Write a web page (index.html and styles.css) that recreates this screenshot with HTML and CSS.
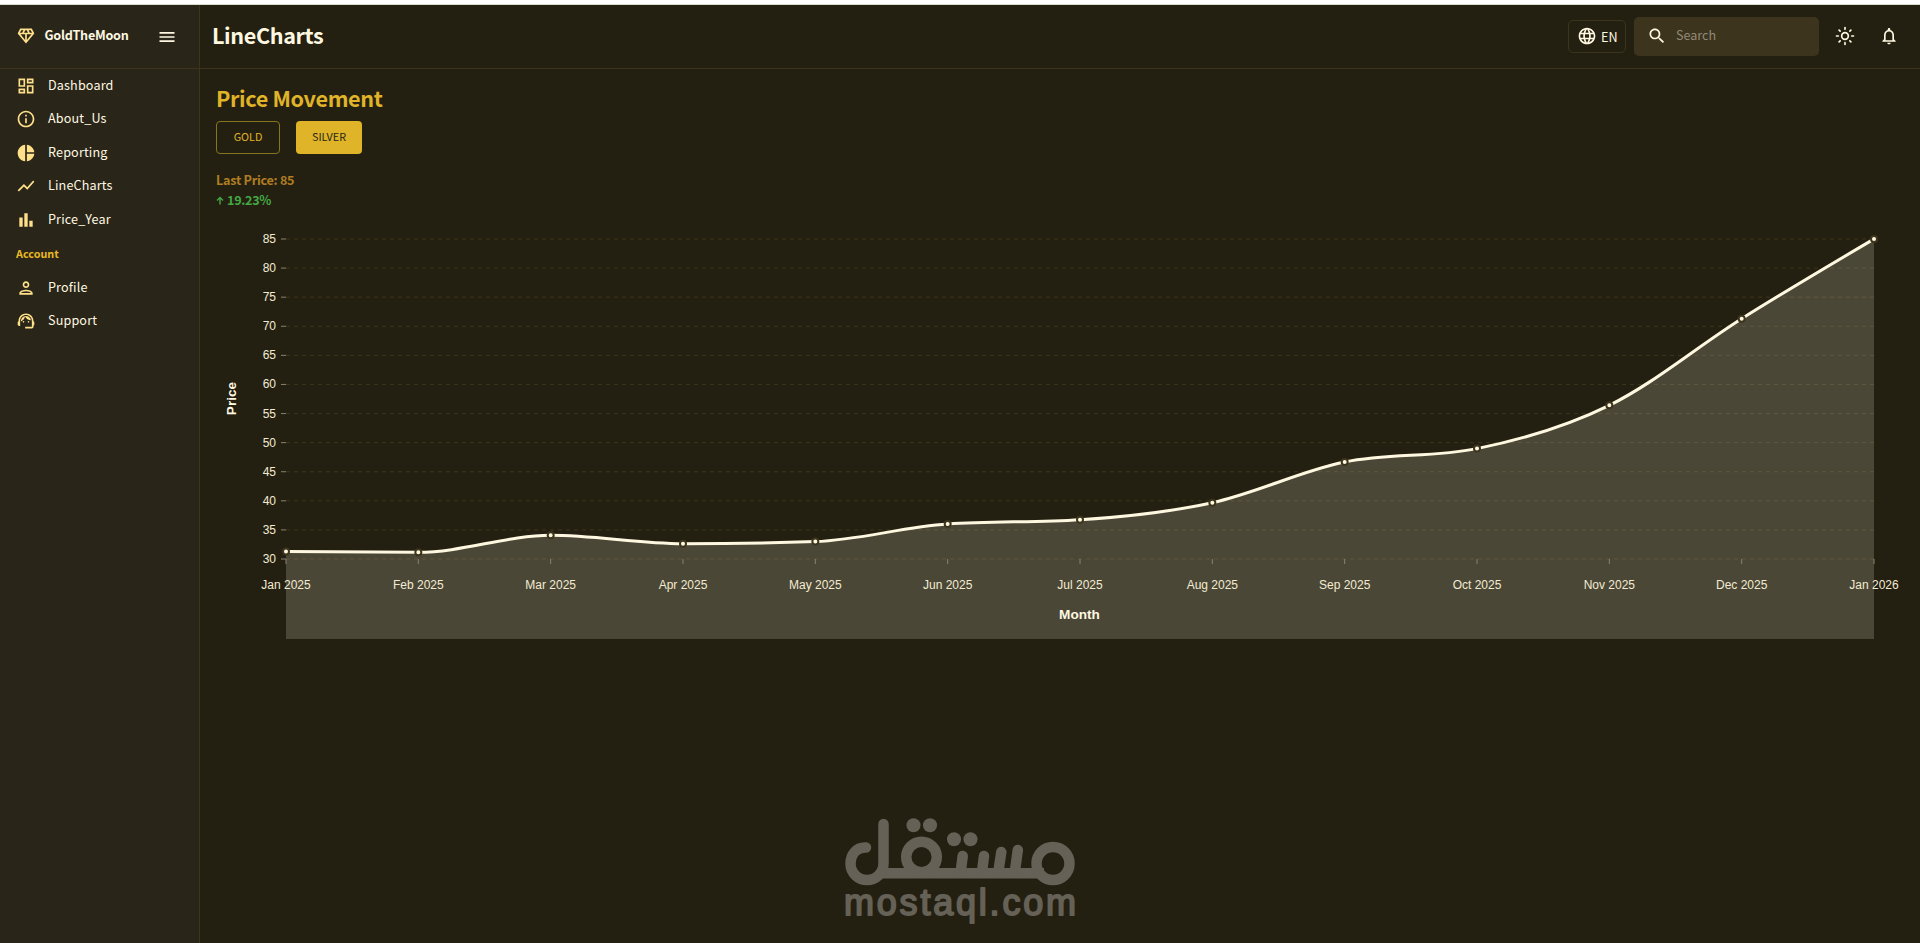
FILE: index.html
```
<!DOCTYPE html>
<html lang="en">
<head>
<meta charset="utf-8">
<title>GoldTheMoon - LineCharts</title>
<link rel="stylesheet" href="styles.css">
</head>
<body>
<div class="app">
  <aside class="sidebar">
    <div class="brand">
      <svg class="icon brand-icon" viewBox="0 0 24 24"><path d="M19 3H5L2 9l10 12L22 9l-3-6zM9.62 8l1.5-3h1.76l1.5 3H9.62zM11 10v6.68L5.44 10H11zm2 0h5.56L13 16.68V10zm6.26-2h-2.65l-1.5-3h2.65l1.5 3zM6.24 5h2.65l-1.5 3H4.74l1.5-3z"/></svg>
      <span class="brand-name">GoldTheMoon</span>
      <svg class="icon menu-icon" viewBox="0 0 24 24"><path d="M3 18h18v-2H3v2zm0-5h18v-2H3v2zm0-7v2h18V6H3z"/></svg>
    </div>
    <nav class="nav">
      <a class="nav-item"><svg class="icon" viewBox="0 0 24 24"><path d="M19 5v2h-4V5h4M9 5v6H5V5h4m10 8v6h-4v-6h4M9 17v2H5v-2h4M21 3h-8v6h8V3zM11 3H3v10h8V3zm10 8h-8v10h8V11zm-10 4H3v6h8v-6z"/></svg><span>Dashboard</span></a>
      <a class="nav-item"><svg class="icon" viewBox="0 0 24 24"><path d="M11 7h2v2h-2zm0 4h2v6h-2zm1-9C6.48 2 2 6.48 2 12s4.480 10 10 10 10-4.480 10-10S17.520 2 12 2zm0 18c-4.410 0-8-3.590-8-8s3.590-8 8-8 8 3.590 8 8-3.590 8-8 8z"/></svg><span>About_Us</span></a>
      <a class="nav-item"><svg class="icon" viewBox="0 0 24 24"><path d="M11 2v20c-5.070-.5-9-4.790-9-10s3.930-9.500 9-10zm2.030 0v8.990H22c-.470-4.740-4.240-8.520-8.970-8.990zm0 11.010V22c4.740-.470 8.500-4.250 8.970-8.990h-8.970z"/></svg><span>Reporting</span></a>
      <a class="nav-item"><svg class="icon" viewBox="0 0 24 24"><path d="M3.500 18.490l6-6.010 4 4L22 6.920l-1.410-1.410-7.090 7.970-4-4L2 16.990z"/></svg><span>LineCharts</span></a>
      <a class="nav-item"><svg class="icon" viewBox="0 0 24 24"><path d="M4 9h4v11H4zm12 4h4v7h-4zm-6-9h4v16h-4z"/></svg><span>Price_Year</span></a>
      <div class="nav-title">Account</div>
      <a class="nav-item"><svg class="icon" viewBox="0 0 24 24"><path d="M12 6c1.100 0 2 .9 2 2s-.9 2-2 2-2-.9-2-2 .9-2 2-2m0 10c2.700 0 5.800 1.290 6 2H6c.230-.720 3.310-2 6-2m0-12C9.790 4 8 5.790 8 8s1.790 4 4 4 4-1.790 4-4-1.790-4-4-4zm0 10c-2.670 0-8 1.340-8 4v2h16v-2c0-2.660-5.330-4-8-4z"/></svg><span>Profile</span></a>
      <a class="nav-item"><svg class="icon" viewBox="0 0 24 24"><path d="M21 12.220C21 6.730 16.740 3 12 3c-4.690 0-9 3.650-9 9.280-.6.340-1 .980-1 1.720v2c0 1.100.9 2 2 2h1v-6.100c0-3.870 3.130-7 7-7s7 3.130 7 7V19h-8v2h8c1.100 0 2-.9 2-2v-1.220c.590-.310 1-.920 1-1.640v-2.300c0-.7-.410-1.310-1-1.620z"/><circle cx="9" cy="13" r="1"/><circle cx="15" cy="13" r="1"/><path d="M18 11.030C17.520 8.180 15.040 6 12.050 6c-3.030 0-6.290 2.510-6.030 6.450 2.470-1.010 4.330-3.210 4.860-5.890 1.310 2.630 4 4.440 7.120 4.470z"/></svg><span>Support</span></a>
    </nav>
  </aside>
  <div class="main">
    <header class="topbar">
      <h1 class="page-title">LineCharts</h1>
      <div class="tools">
        <button class="lang"><svg class="icon" viewBox="0 0 24 24"><path d="M11.990 2C6.470 2 2 6.480 2 12s4.470 10 9.990 10C17.520 22 22 17.520 22 12S17.520 2 11.990 2zm6.930 6h-2.950c-.320-1.250-.780-2.450-1.380-3.560 1.840.630 3.370 1.910 4.330 3.560zM12 4.040c.830 1.200 1.480 2.530 1.910 3.960h-3.820c.430-1.430 1.080-2.760 1.910-3.960zM4.260 14C4.100 13.360 4 12.690 4 12s.1-1.360.260-2h3.380c-.080.660-.140 1.320-.140 2s.060 1.340.140 2H4.260zm.820 2h2.950c.320 1.250.780 2.450 1.380 3.560-1.840-.630-3.370-1.900-4.330-3.560zm2.950-8H5.080c.960-1.660 2.490-2.930 4.330-3.560C8.810 5.550 8.350 6.750 8.030 8zM12 19.960c-.830-1.200-1.480-2.530-1.910-3.960h3.820c-.430 1.430-1.080 2.760-1.910 3.960zM14.340 14H9.660c-.090-.660-.160-1.320-.160-2s.070-1.350.160-2h4.680c.090.650.160 1.320.160 2s-.070 1.340-.160 2zm.250 5.560c.6-1.110 1.060-2.310 1.380-3.560h2.950c-.960 1.650-2.490 2.930-4.330 3.560zM16.360 14c.080-.660.140-1.320.140-2s-.060-1.340-.140-2h3.380c.160.640.260 1.310.260 2s-.1 1.360-.260 2h-3.380z"/></svg><span>EN</span></button>
        <div class="search"><svg class="icon" viewBox="0 0 24 24"><path d="M15.500 14h-.790l-.280-.270C15.410 12.590 16 11.110 16 9.500 16 5.910 13.090 3 9.500 3S3 5.910 3 9.500 5.910 16 9.500 16c1.610 0 3.090-.590 4.230-1.570l.270.280v.790l5 4.990L20.490 19l-4.990-5zm-6 0C7.010 14 5 11.990 5 9.500S7.010 5 9.500 5 14 7.010 14 9.500 11.990 14 9.500 14z"/></svg><span>Search</span></div>
        <svg class="icon sun" viewBox="0 0 24 24"><circle class="stroke" cx="12" cy="12" r="4"/><path class="stroke round" d="M12 1.800v2.200M12 20v2.200M1.800 12H4M20 12h2.200M4.900 4.900l1.300 1.300M17.800 17.800l1.300 1.300M4.900 19.100l1.300-1.300M17.800 6.200l1.300-1.300"/></svg>
        <svg class="icon bell" viewBox="0 0 24 24"><path d="M12 22c1.100 0 2-.9 2-2h-4c0 1.100.9 2 2 2zm6-6v-5c0-3.070-1.630-5.640-4.500-6.320V4c0-.830-.670-1.500-1.500-1.500s-1.500.670-1.500 1.500v.680C7.640 5.360 6 7.920 6 11v5l-2 2v1h16v-1l-2-2zm-2 1H8v-6c0-2.480 1.510-4.500 4-4.500s4 2.020 4 4.500v6z"/></svg>
      </div>
    </header>
    <main class="content">
      <h2 class="heading">Price Movement</h2>
      <div class="toggles">
        <button class="btn btn-outline">GOLD</button>
        <button class="btn btn-solid">SILVER</button>
      </div>
      <p class="last-price">Last Price: 85</p>
      <p class="change"><svg class="arrow" viewBox="0 0 8 10"><path d="M4 9.500V3M1 5.500l3-3 3 3"/></svg><span>19.23%</span></p>
      <svg class="chart" viewBox="216 215 1704 430">
        <g class="grid">
          <path d="M286 239H1874M286 268.090H1874M286 297.180H1874M286 326.270H1874M286 355.360H1874M286 384.450H1874M286 413.550H1874M286 442.640H1874M286 471.730H1874M286 500.820H1874M286 529.910H1874M286 559H1874"/>
        </g>
        <path class="area" d="M286 551.400C330.110 551.900 374.220 552.300 418.330 552.300C462.440 552.300 506.560 535.300 550.670 535.300C594.780 535.300 638.890 543.700 683 543.700C727.110 543.700 771.220 543.070 815.330 541.600C859.440 540.130 903.560 526.730 947.670 524C991.780 521.270 1035.890 522.430 1080 519.700C1124.110 516.970 1168.220 512.320 1212.330 502.700C1256.440 493.080 1300.560 470.930 1344.670 462C1388.780 453.070 1432.890 457.530 1477 448.600C1521.110 439.670 1565.220 426.950 1609.330 405.300C1653.440 383.650 1697.560 346.420 1741.670 318.700C1785.780 290.980 1829.890 265 1874 239V639H286Z"/>
        <g class="ticks">
          <path d="M281 239h5M281 268.090h5M281 297.180h5M281 326.270h5M281 355.360h5M281 384.450h5M281 413.550h5M281 442.640h5M281 471.730h5M281 500.820h5M281 529.910h5M281 559h5M286 559v5M418.330 559v5M550.670 559v5M683 559v5M815.330 559v5M947.670 559v5M1080 559v5M1212.330 559v5M1344.670 559v5M1477 559v5M1609.330 559v5M1741.670 559v5M1874 559v5"/>
        </g>
        <g class="labels labels-y">
          <text x="276" y="243">85</text><text x="276" y="272">80</text><text x="276" y="301">75</text><text x="276" y="330">70</text><text x="276" y="359">65</text><text x="276" y="388">60</text><text x="276" y="418">55</text><text x="276" y="447">50</text><text x="276" y="476">45</text><text x="276" y="505">40</text><text x="276" y="534">35</text><text x="276" y="563">30</text>
        </g>
        <g class="labels labels-x">
          <text x="286" y="589">Jan 2025</text><text x="418.330" y="589">Feb 2025</text><text x="550.670" y="589">Mar 2025</text><text x="683" y="589">Apr 2025</text><text x="815.330" y="589">May 2025</text><text x="947.670" y="589">Jun 2025</text><text x="1080" y="589">Jul 2025</text><text x="1212.330" y="589">Aug 2025</text><text x="1344.670" y="589">Sep 2025</text><text x="1477" y="589">Oct 2025</text><text x="1609.330" y="589">Nov 2025</text><text x="1741.670" y="589">Dec 2025</text><text x="1874" y="589">Jan 2026</text>
        </g>
        <text class="axis-title" x="1079.500" y="619">Month</text>
        <text class="axis-title" transform="translate(236 398.500) rotate(-90)">Price</text>
        <path class="line" d="M286 551.400C330.110 551.900 374.220 552.300 418.330 552.300C462.440 552.300 506.560 535.300 550.670 535.300C594.780 535.300 638.890 543.700 683 543.700C727.110 543.700 771.220 543.070 815.330 541.600C859.440 540.130 903.560 526.730 947.670 524C991.780 521.270 1035.890 522.430 1080 519.700C1124.110 516.970 1168.220 512.320 1212.330 502.700C1256.440 493.080 1300.560 470.930 1344.670 462C1388.780 453.070 1432.890 457.530 1477 448.600C1521.110 439.670 1565.220 426.950 1609.330 405.300C1653.440 383.650 1697.560 346.420 1741.670 318.700C1785.780 290.980 1829.890 265 1874 239"/>
        <g class="dots">
          <circle cx="286" cy="551.400" r="3"/><circle cx="418.330" cy="552.300" r="3"/><circle cx="550.670" cy="535.300" r="3"/><circle cx="683" cy="543.700" r="3"/><circle cx="815.330" cy="541.600" r="3"/><circle cx="947.670" cy="524" r="3"/><circle cx="1080" cy="519.700" r="3"/><circle cx="1212.330" cy="502.700" r="3"/><circle cx="1344.670" cy="462" r="3"/><circle cx="1477" cy="448.600" r="3"/><circle cx="1609.330" cy="405.300" r="3"/><circle cx="1741.670" cy="318.700" r="3"/><circle cx="1874" cy="239" r="3"/>
        </g>
      </svg>
    </main>
  </div>
</div>
<svg class="watermark" viewBox="820 800 280 143">
  <g class="wm-lines">
    <path d="M866 847.500C856 847 850.500 855 850.500 863.500a16.500 16.500 0 0 0 33 0V824"/>
    <path class="wm-bar" d="M881 873.300H1044"/>
    <circle cx="921.500" cy="857" r="15.300"/>
    <circle cx="1053" cy="863.500" r="16.500"/>
    <path d="M962.700 856l-2 16M984 856l-2 16M1001.300 852l-3 20M1017.800 850l-3 22"/>
  </g>
  <g class="wm-dots"><circle cx="913.500" cy="825.300" r="7"/><circle cx="930" cy="825.300" r="7"/><circle cx="954" cy="839.300" r="7"/><circle cx="970.500" cy="839.300" r="7"/></g>
  <text class="wm-text" x="844" y="915" textLength="232" lengthAdjust="spacing">mostaql.com</text>
</svg>
</body>
</html>
```
FILE: styles.css
```
* { box-sizing: border-box; }

body {
  margin: 0;
  height: 943px;
  overflow: hidden;
  background: #242011;
  color: #fff8e1;
  font-family: "Noto Sans CJK SC", "Noto Sans", sans-serif;
}

h1, h2, p { margin: 0; }
button { font-family: inherit; }

.app {
  display: flex;
  height: 943px;
  border-top: 4px solid #fff;
  box-shadow: inset 0 1px #d8dccf;
}

.icon { width: 20px; height: 20px; fill: #ffe08a; flex: none; }

.sidebar {
  width: 200px;
  flex: none;
  margin-top: 1px;
  background: #292519;
  border-right: 1px solid #3d341c;
}

.brand {
  display: flex;
  align-items: center;
  height: 64px;
  padding: 0 0 2px 16px;
  border-bottom: 1px solid #3d341c;
}
.brand-name {
  width: 114px;
  margin-left: 8.500px;
  padding-bottom: 2px;
  font-size: 12.600px;
  font-weight: 700;
  letter-spacing: -.25px;
  line-height: 20px;
  white-space: nowrap;
}
.menu-icon { margin-top: 2px; width: 20px; height: 20px; fill: #fff8e1; margin-left: -1.500px; }

.nav-item {
  display: flex;
  align-items: center;
  gap: 12px;
  height: 33.500px;
  padding-left: 16px;
  font-size: 12.600px;
  letter-spacing: .15px;
  line-height: 20px;
}
.nav-item span { padding-bottom: 2px; }
.nav-title {
  height: 34.300px;
  padding: 7px 0 0 16px;
  color: #e8b923;
  font-size: 10.800px;
  font-weight: 700;
  line-height: 18px;
}

.main { flex: 1; margin-top: 1px; }

.topbar {
  display: flex;
  align-items: center;
  justify-content: space-between;
  height: 64px;
  padding: 0 21px 0 12px;
  border-bottom: 1px solid #3d341c;
}
.page-title { padding-bottom: 3px; font-size: 21.600px; font-weight: 600; letter-spacing: -.38px; line-height: 30px; }

.tools { display: flex; align-items: center; padding-bottom: 1px; }
.lang {
  display: flex;
  align-items: center;
  gap: 4px;
  width: 58px;
  height: 33px;
  margin-right: 8px;
  padding: 0 0 0 8px;
  border: 1px solid #3d341c;
  border-radius: 5px;
  background: none;
  color: #fff8e1;
  font-size: 12.600px;
}
.search {
  display: flex;
  align-items: center;
  gap: 9px;
  width: 185px;
  height: 39px;
  padding-left: 13px;
  border-radius: 5px;
  background: #3d341e;
  color: #928a76;
  font-size: 12.600px;
}
.search span { padding-bottom: 3px; }
.tools .icon { fill: #fff8e1; }
.tools .sun { margin-left: 16px; }
.tools .bell { margin-left: 24px; }
.tools .stroke { fill: none; stroke: #fff8e1; stroke-width: 2; }
.round { stroke-linecap: round; }

.content { padding: 13px 0 0 16px; }
.heading { color: #e0b428; font-size: 21.600px; font-weight: 600; letter-spacing: -.35px; line-height: 32px; }
.toggles { display: flex; gap: 16px; margin-top: 7px; }
.btn {
  height: 33px;
  padding: 0 0 4px;
  border-radius: 4px;
  font-size: 10.800px;
  line-height: 16px;
}
.btn-outline { width: 64px; border: 1px solid #85761f; background: none; color: #e0b428; }
.btn-solid { width: 66px; border: 0; background: #dfb428; color: #292519; }
.last-price { margin-top: 16px; color: #b07d22; font-size: 12.600px; font-weight: 600; letter-spacing: -.26px; line-height: 20px; }
.change { display: flex; align-items: center; gap: 3px; color: #43a843; font-size: 12.600px; font-weight: 600; letter-spacing: -.3px; line-height: 20px; }
.arrow { width: 8px; height: 10px; fill: none; stroke: #43a843; stroke-width: 1.400; }

.chart { display: block; width: 1704px; height: 430px; margin-top: 5px; }
.grid path { stroke: #3d351b; stroke-dasharray: 4 4; fill: none; }
.area { fill: #fff8e1; fill-opacity: .18; }
.ticks path { stroke: #88836f; fill: none; }
.line { fill: none; stroke: #fff8e1; stroke-width: 3; }
.dots circle { fill: #fff8e1; stroke: #3d341c; stroke-width: 2; }
.labels { fill: #f2ebd2; font: 12px "Liberation Sans", Arial, sans-serif; }
.labels-y { text-anchor: end; }
.labels-x { text-anchor: middle; }
.axis-title { fill: #fff8e1; font: bold 13.600px "Liberation Sans", Arial, sans-serif; text-anchor: middle; }

.watermark { position: absolute; left: 820px; top: 800px; width: 280px; height: 143px; }
.wm-lines { fill: none; stroke: #656157; stroke-width: 10.500; stroke-linecap: round; }
.wm-bar { stroke-linecap: butt; }
.wm-dots, .wm-text { fill: #656157; }
.wm-text { font: 36px "Liberation Sans", Arial, sans-serif; stroke: #656157; stroke-width: 1.800; stroke-linejoin: round; }
```
